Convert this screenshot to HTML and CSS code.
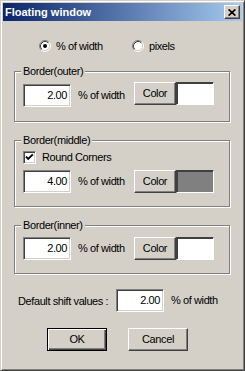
FILE: index.html
```html
<!DOCTYPE html>
<html>
<head>
<meta charset="utf-8">
<link rel="stylesheet" href="styles.css">
</head>
<body>
<div class="window">
  <div class="titlebar">
    <span class="title">Floating window</span>
    <span class="close"><svg width="8" height="7" viewBox="0 0 8 7"><path d="M0.6 0.4 L7.4 6.6 M7.4 0.4 L0.6 6.6" stroke="#000" stroke-width="1.7" fill="none"/></svg></span>
  </div>
  <div class="content">
    <div class="radios">
      <label class="opt first">
        <svg class="radio" width="12" height="12" viewBox="0 0 12 12">
          <circle cx="6" cy="6" r="4.5" fill="#fff"/>
          <path d="M2.11 9.89 A5.5 5.5 0 0 1 9.89 2.11" stroke="#808080" fill="none"/>
          <path d="M9.89 2.11 A5.5 5.5 0 0 1 2.11 9.89" stroke="#fff" fill="none"/>
          <path d="M2.82 9.18 A4.5 4.5 0 0 1 9.18 2.82" stroke="#404040" fill="none"/>
          <path d="M9.18 2.82 A4.5 4.5 0 0 1 2.82 9.18" stroke="#d4d0c8" fill="none"/>
          <circle cx="6" cy="6" r="2" fill="#000"/>
        </svg>
        <span>% of width</span>
      </label>
      <label class="opt">
        <svg class="radio" width="12" height="12" viewBox="0 0 12 12">
          <circle cx="6" cy="6" r="4.5" fill="#fff"/>
          <path d="M2.11 9.89 A5.5 5.5 0 0 1 9.89 2.11" stroke="#808080" fill="none"/>
          <path d="M9.89 2.11 A5.5 5.5 0 0 1 2.11 9.89" stroke="#fff" fill="none"/>
          <path d="M2.82 9.18 A4.5 4.5 0 0 1 9.18 2.82" stroke="#404040" fill="none"/>
          <path d="M9.18 2.82 A4.5 4.5 0 0 1 2.82 9.18" stroke="#d4d0c8" fill="none"/>
        </svg>
        <span>pixels</span>
      </label>
    </div>

    <div class="group g1">
      <span class="legend">Border(outer)</span>
      <div class="row tall">
        <span class="field drop">2.00</span>
        <span class="unit drop">% of width</span>
        <span class="btn colorbtn">Color</span>
        <span class="swatch white"></span>
      </div>
    </div>

    <div class="group g2">
      <span class="legend">Border(middle)</span>
      <label class="checkrow">
        <span class="check"><svg width="11" height="11" viewBox="0 0 11 11"><path d="M2 4.6 L4.2 6.9 L8.8 2.3" stroke="#000" stroke-width="1.9" fill="none"/></svg></span>
        <span>Round Corners</span>
      </label>
      <div class="row spaced">
        <span class="field">4.00</span>
        <span class="unit">% of width</span>
        <span class="btn colorbtn">Color</span>
        <span class="swatch gray"></span>
      </div>
    </div>

    <div class="group g3">
      <span class="legend">Border(inner)</span>
      <div class="row">
        <span class="field">2.00</span>
        <span class="unit">% of width</span>
        <span class="btn colorbtn">Color</span>
        <span class="swatch white"></span>
      </div>
    </div>

    <div class="shift">
      <span class="shiftlabel">Default shift values :</span>
      <span class="field">2.00</span>
      <span class="unit">% of width</span>
    </div>

    <div class="actions">
      <span class="btn action default">OK</span>
      <span class="btn action cancel">Cancel</span>
    </div>
  </div>
</div>
</body>
</html>
```

FILE: styles.css
```css
html, body {
  margin: 0;
  padding: 0;
  background: #d4d0c8;
}

body {
  font-family: "Liberation Sans", Arial, sans-serif;
  font-size: 11px;
  color: #000;
}

.window {
  box-sizing: border-box;
  width: 245px;
  height: 371px;
  background: #d4d0c8;
  border: 1px solid;
  border-color: #d4d0c8 #404040 #404040 #d4d0c8;
  box-shadow: inset 1px 1px #fff, inset -1px -1px #808080;
  padding: 2px;
}

.titlebar {
  height: 18px;
  display: flex;
  align-items: center;
  padding: 0 2px;
  background: linear-gradient(to right, #0a246a, #a6caf0);
  color: #fff;
  font-weight: bold;
}

.title {
  line-height: 18px;
}

.close {
  margin-left: auto;
  box-sizing: border-box;
  width: 16px;
  height: 14px;
  background: #d4d0c8;
  border: 1px solid;
  border-color: #fff #404040 #404040 #fff;
  box-shadow: inset -1px -1px #808080;
  display: flex;
  align-items: center;
  justify-content: center;
}

.close svg {
  display: block;
}

.content {
  padding: 0 12px 0 11px;
  letter-spacing: -0.4px;
  white-space: nowrap;
}

.radios {
  display: flex;
  margin-top: 19px;
  padding-left: 25px;
  height: 13px;
}

.opt {
  display: flex;
  align-items: flex-start;
  gap: 5px;
  line-height: 13px;
}

.opt.first {
  width: 93px;
}

.radio {
  display: block;
}

.group {
  position: relative;
  box-sizing: border-box;
  width: 216px;
  border: 1px solid #808080;
  box-shadow: inset 1px 1px #fff, 1px 1px #fff;
  margin-top: 18px;
}

.g1 {
  padding: 10px 0 14px 8px;
}

.g2 {
  padding: 10px 0 13px 8px;
}

.g3 {
  padding: 11px 0 13px 8px;
}

.legend {
  position: absolute;
  top: -7px;
  left: 6px;
  padding: 0 2px;
  background: #d4d0c8;
  line-height: 13px;
}

.row {
  display: flex;
  align-items: flex-start;
  height: 23px;
}

.row.tall {
  height: 25px;
}

.row.spaced {
  margin-top: 6px;
}

.drop {
  margin-top: 2px;
}

.field {
  box-sizing: border-box;
  width: 48px;
  height: 23px;
  background: #fff;
  border: 1px solid;
  border-color: #808080 #fff #fff #808080;
  box-shadow: inset 1px 1px #404040, inset -1px -1px #d4d0c8;
  padding: 0 3px;
  text-align: right;
  line-height: 21px;
}

.unit {
  margin-left: 7px;
  width: 56px;
  line-height: 23px;
}

.btn {
  box-sizing: border-box;
  background: #d4d0c8;
  border: 1px solid;
  border-color: #fff #404040 #404040 #fff;
  box-shadow: inset -1px -1px #808080;
  text-align: center;
}

.colorbtn {
  width: 42px;
  height: 23px;
  line-height: 20px;
}

.swatch {
  box-sizing: border-box;
  width: 38px;
  height: 23px;
  border: 1px solid;
  border-color: #404040 #fff #fff #404040;
  box-shadow: inset 1px 1px #404040;
}

.swatch.white {
  background: #fff;
}

.swatch.gray {
  background: #808080;
}

.checkrow {
  display: flex;
  align-items: flex-start;
  gap: 6px;
  height: 13px;
  line-height: 13px;
}

.check {
  box-sizing: border-box;
  width: 13px;
  height: 13px;
  background: #fff;
  border: 1px solid;
  border-color: #808080 #fff #fff #808080;
  box-shadow: inset 1px 1px #404040, inset -1px -1px #d4d0c8;
}

.check svg {
  display: block;
}

.shift {
  display: flex;
  align-items: flex-start;
  margin-top: 15px;
  padding-left: 4px;
  height: 23px;
}

.shiftlabel {
  width: 98px;
  line-height: 25px;
}

.actions {
  display: flex;
  margin-top: 16px;
  padding-left: 33px;
  gap: 21px;
}

.action {
  width: 60px;
  height: 23px;
  line-height: 20px;
}

.action.default {
  border-color: #000;
  box-shadow: inset 1px 1px #fff, inset -1px -1px #404040, inset -2px -2px #808080;
}
```
